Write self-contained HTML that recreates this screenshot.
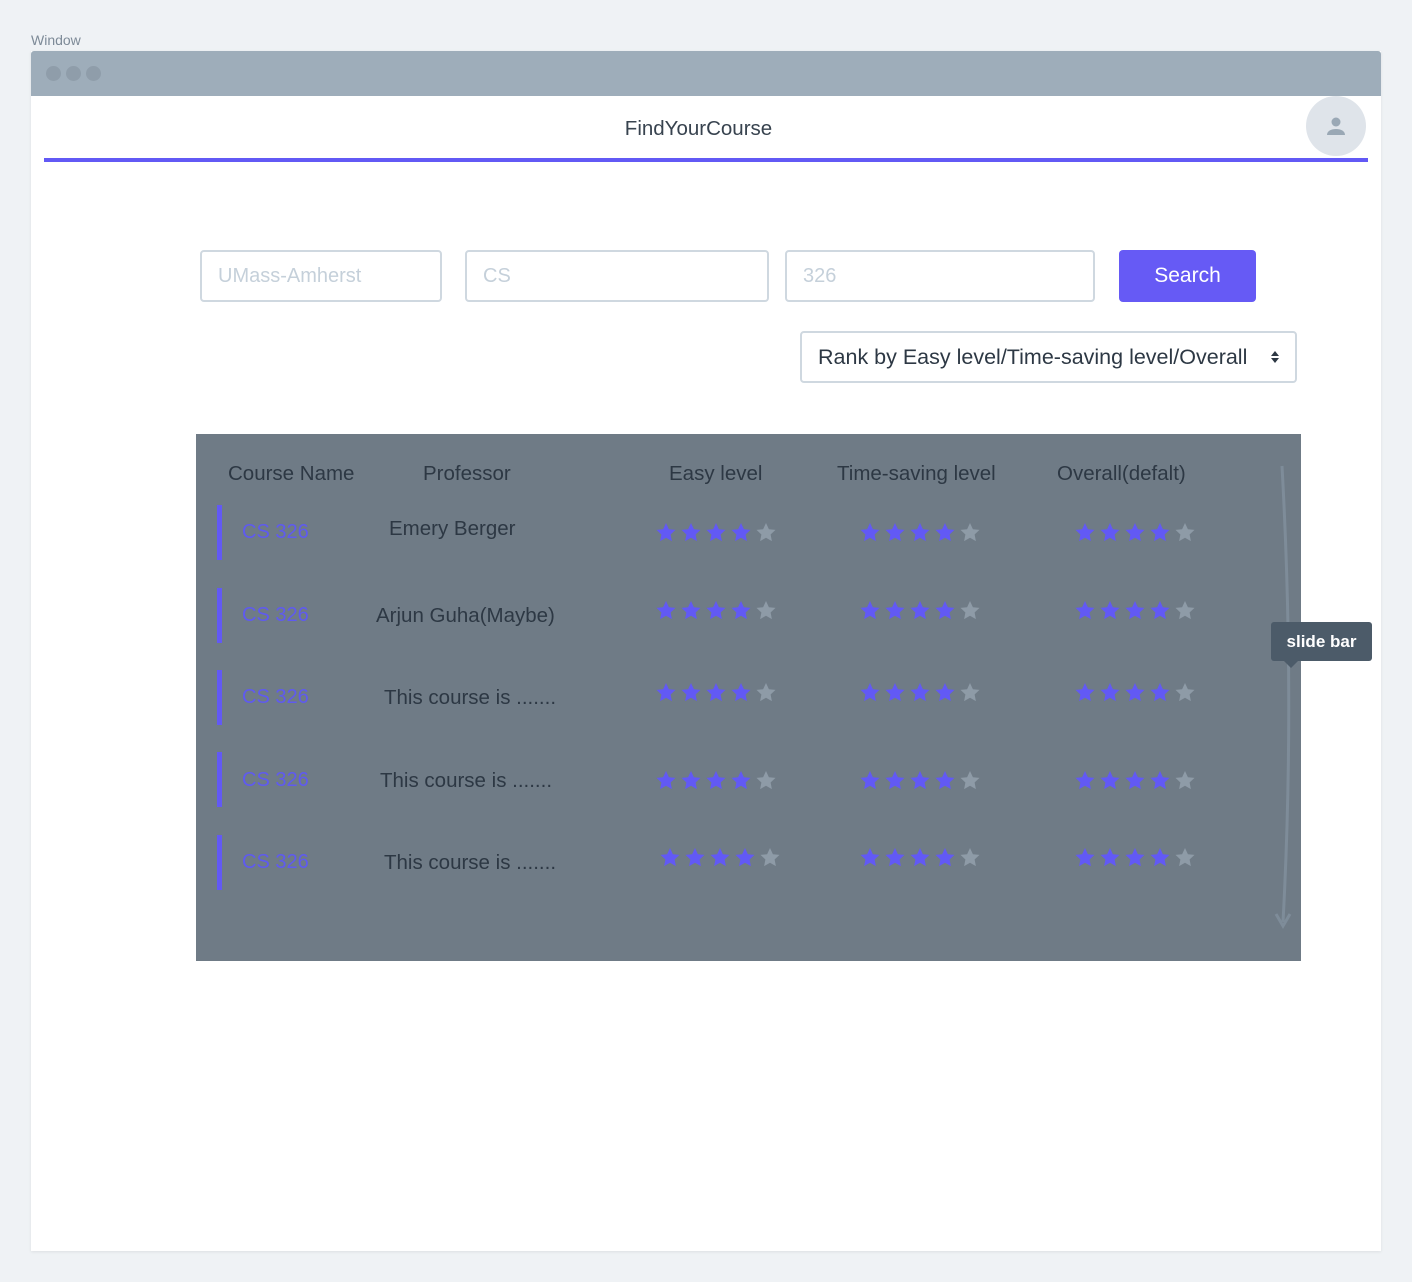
<!DOCTYPE html>
<html><head><meta charset="utf-8"><style>
*{margin:0;padding:0;box-sizing:border-box}
body{width:1412px;height:1282px;background:#eff2f5;font-family:"Liberation Sans",sans-serif;position:relative;overflow:hidden}
.a{position:absolute;white-space:nowrap}
.inp{position:absolute;border:2px solid #cfd8e0;border-radius:4px;background:#fff;color:#c5d0da;font-size:20px;padding-left:16px;display:flex;align-items:center}
.t{color:#2d3844;font-size:20.5px}
.c{color:#5f5af0;font-size:20px}
.bar{position:absolute;left:217px;width:5px;height:55px;background:#6259f5}
</style></head><body>
<div class="a" style="left:31px;top:32px;font-size:14px;color:#7d8a97">Window</div>
<div class="a" style="left:31px;top:51px;width:1350px;height:1200px;background:#fff;box-shadow:0 1px 3px rgba(0,0,0,.08)"></div>
<div class="a" style="left:31px;top:51px;width:1350px;height:45px;background:#9eadba;border-radius:3px 3px 0 0"></div>
<div class="a" style="left:46px;top:66px;width:15px;height:15px;border-radius:50%;background:#8f9daa"></div>
<div class="a" style="left:66px;top:66px;width:15px;height:15px;border-radius:50%;background:#8f9daa"></div>
<div class="a" style="left:86px;top:66px;width:15px;height:15px;border-radius:50%;background:#8f9daa"></div>
<div class="a" style="left:0;width:1397px;top:117px;text-align:center;font-size:20.5px;color:#38434f">FindYourCourse</div>
<div class="a" style="left:1306px;top:96px;width:60px;height:60px;border-radius:50%;background:#dfe4ea"></div>
<svg class="a" style="left:1324px;top:114px" width="24" height="24" viewBox="0 0 24 24"><circle cx="12" cy="8" r="4.5" fill="#9aa8b5"/><path d="M3 21c0-4 4-6 9-6s9 2 9 6z" fill="#9aa8b5"/></svg>
<div class="a" style="left:44px;top:158px;width:1324px;height:4px;background:#6259f5"></div>

<div class="inp" style="left:200px;top:250px;width:242px;height:52px">UMass-Amherst</div>
<div class="inp" style="left:465px;top:250px;width:304px;height:52px">CS</div>
<div class="inp" style="left:785px;top:250px;width:310px;height:52px">326</div>
<div class="a" style="left:1119px;top:250px;width:137px;height:52px;background:#665af5;border-radius:4px;color:#fff;font-size:21px;display:flex;align-items:center;justify-content:center">Search</div>
<div class="inp" style="left:800px;top:331px;width:497px;height:52px;color:#2d3844;font-size:21.5px">Rank by Easy level/Time-saving level/Overall</div>
<svg class="a" style="left:1270px;top:349px" width="10" height="16" viewBox="0 0 10 16"><path d="M1 7L5 2L9 7zM1 9L5 14L9 9z" fill="#2d3844"/></svg>

<div class="a" style="left:196px;top:434px;width:1105px;height:527px;background:#6f7b86"></div>
<div class="a t" style="left:228px;top:462px">Course Name</div>
<div class="a t" style="left:423px;top:462px">Professor</div>
<div class="a t" style="left:669px;top:462px">Easy level</div>
<div class="a t" style="left:837px;top:462px">Time-saving level</div>
<div class="a t" style="left:1057px;top:462px">Overall(defalt)</div>

<div class="bar" style="top:505px"></div><div class="bar" style="top:588px"></div><div class="bar" style="top:670px"></div><div class="bar" style="top:752px"></div><div class="bar" style="top:835px"></div>
<div class="a c" style="left:242px;top:521px">CS 326</div>
<div class="a c" style="left:242px;top:604px">CS 326</div>
<div class="a c" style="left:242px;top:686px">CS 326</div>
<div class="a c" style="left:242px;top:769px">CS 326</div>
<div class="a c" style="left:242px;top:851px">CS 326</div>
<div class="a t" style="left:389px;top:517px">Emery Berger</div>
<div class="a t" style="left:376px;top:604px">Arjun Guha(Maybe)</div>
<div class="a t" style="left:384px;top:686px">This course is .......</div>
<div class="a t" style="left:380px;top:769px">This course is .......</div>
<div class="a t" style="left:384px;top:851px">This course is .......</div>

<svg class="a" style="left:0;top:0" width="1412" height="1282">
<defs><polygon id="s" points="0,-10 2.9,-3.8 9.5,-3.1 4.6,1.5 5.9,8.1 0,4.8 -5.9,8.1 -4.6,1.5 -9.5,-3.1 -2.9,-3.8"/>
<g id="row">
<use href="#s" x="0" fill="#6259f5"/><use href="#s" x="25" fill="#6259f5"/><use href="#s" x="50" fill="#6259f5"/><use href="#s" x="75" fill="#6259f5"/><use href="#s" x="100" fill="#8e9ba7"/>
</g></defs>
<g transform="translate(666,533)"><use href="#row"/></g>
<g transform="translate(870,533)"><use href="#row"/></g>
<g transform="translate(1085,533)"><use href="#row"/></g>
<g transform="translate(666,611)"><use href="#row"/></g>
<g transform="translate(870,611)"><use href="#row"/></g>
<g transform="translate(1085,611)"><use href="#row"/></g>
<g transform="translate(666,693)"><use href="#row"/></g>
<g transform="translate(870,693)"><use href="#row"/></g>
<g transform="translate(1085,693)"><use href="#row"/></g>
<g transform="translate(666,781)"><use href="#row"/></g>
<g transform="translate(870,781)"><use href="#row"/></g>
<g transform="translate(1085,781)"><use href="#row"/></g>
<g transform="translate(670,858)"><use href="#row"/></g>
<g transform="translate(870,858)"><use href="#row"/></g>
<g transform="translate(1085,858)"><use href="#row"/></g>
<path d="M1282 466 Q1295 700 1283 922" stroke="#7e8c99" stroke-width="3" fill="none"/>
<path d="M1276 914 L1283 926 L1290 914" stroke="#7e8c99" stroke-width="3" fill="none"/>
</svg>
<div class="a" style="left:1271px;top:622px;width:101px;height:39px;background:#4c5b69;border-radius:3px;color:#fff;font-size:17px;font-weight:bold;display:flex;align-items:center;justify-content:center">slide bar</div>
<svg class="a" style="left:1283px;top:660px" width="16" height="10"><path d="M0 0L8 8L16 0z" fill="#4c5b69"/></svg>
</body></html>
